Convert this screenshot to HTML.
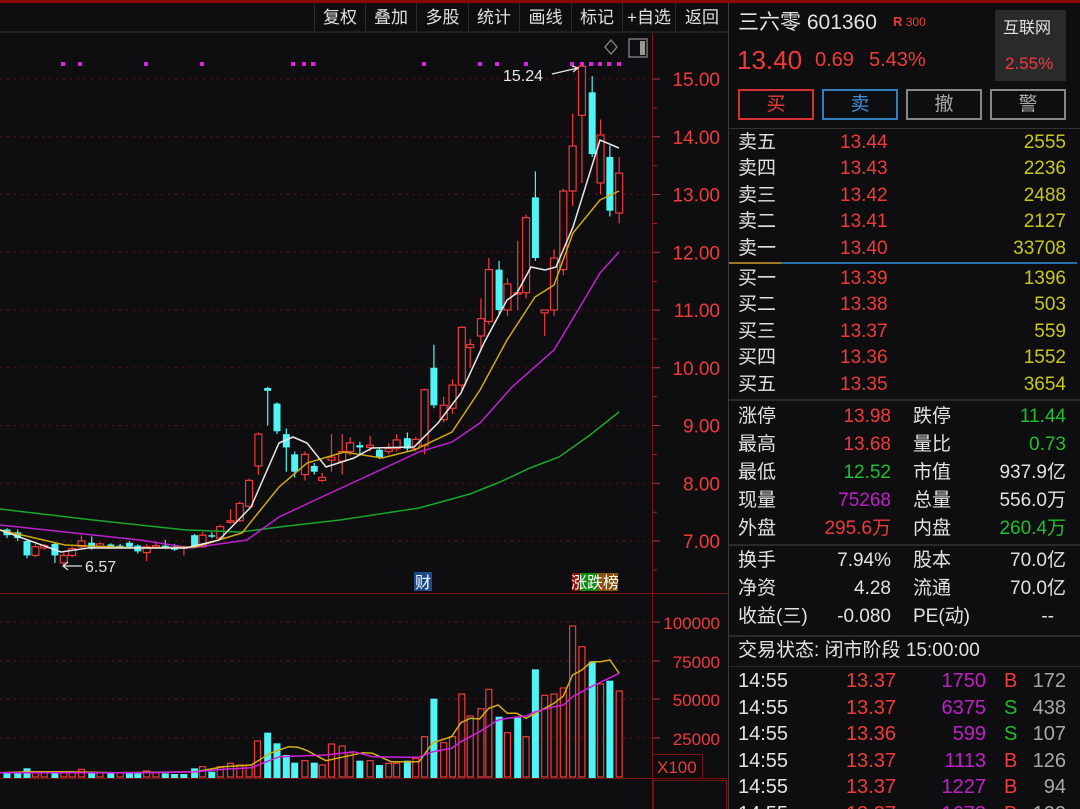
<!DOCTYPE html>
<html><head><meta charset="utf-8"><style>
*{margin:0;padding:0;box-sizing:border-box}
html,body{width:1080px;height:809px;overflow:hidden}
body{background:#0e0e10;position:relative;font-family:"Liberation Sans","Noto Sans CJK SC",sans-serif;color:#e0e0e0}
.a{position:absolute;white-space:nowrap;line-height:1}
.r{color:#f03a3a}.y{color:#c8c81a}.g{color:#1fbf2f}.m{color:#c020c8}.w{color:#e2e2e2}.gr{color:#a8a8a8}
.tb{position:absolute;top:3px;height:29px;border-left:1px solid #2a2a2a;font-size:17px;line-height:29px;text-align:center;color:#e0e0e0}
.btn{position:absolute;top:89px;height:31px;width:76px;border:2px solid #888;font-size:19px;line-height:27px;text-align:center}
</style></head><body>
<div class="a" style="left:0;top:0;width:1080px;height:3px;background:#8a0a0a"></div>
<div class="a" style="left:0;top:31px;width:728px;height:2px;background:#202020"></div>
<div class="tb" style="left:314px;width:51px">复权</div>
<div class="tb" style="left:365px;width:51px">叠加</div>
<div class="tb" style="left:416px;width:52px">多股</div>
<div class="tb" style="left:468px;width:51px">统计</div>
<div class="tb" style="left:519px;width:52px">画线</div>
<div class="tb" style="left:571px;width:51px">标记</div>
<div class="tb" style="left:622px;width:53px">+自选</div>
<div class="tb" style="left:675px;width:53px">返回</div>

<svg id="ch" class="a" style="left:0;top:0" width="728" height="809" xmlns="http://www.w3.org/2000/svg"></svg>

<div class="a" style="left:728px;top:3px;width:1px;height:806px;background:#3a3a3a"></div>
<div class="a w" style="left:738px;top:12px;font-size:21px">三六零 601360</div>
<div class="a r" style="left:893px;top:15px;font-size:13px;font-weight:bold">R<span style="font-weight:normal;font-size:12px"> 300</span></div>
<div class="a" style="left:995px;top:10px;width:71px;height:71px;background:#2a2a2c"></div>
<div class="a w" style="left:1003px;top:21px;font-size:16px">互联网</div>
<div class="a r" style="left:1005px;top:55px;font-size:17px">2.55%</div>
<div class="a r" style="left:737px;top:47px;font-size:26px">13.40</div>
<div class="a r" style="left:815px;top:50px;font-size:20px">0.69</div>
<div class="a r" style="left:869px;top:50px;font-size:20px">5.43%</div>
<div class="btn r" style="left:738px;border-color:#d83030">买</div>
<div class="btn" style="left:822px;border-color:#2f7fc1;color:#3a90d8">卖</div>
<div class="btn gr" style="left:906px">撤</div>
<div class="btn gr" style="left:990px">警</div>
<div class="a" style="left:729px;top:128px;width:351px;height:1px;background:#333"></div>
<div id="ob"></div>
<div class="a" style="left:729px;top:262px;width:52px;height:2px;background:#a07820"></div>
<div class="a" style="left:781px;top:262px;width:296px;height:2px;background:#2f6fa8"></div>
<div class="a" style="left:729px;top:399px;width:351px;height:2px;background:#2a2a2a"></div>
<div class="a" style="left:729px;top:544px;width:351px;height:2px;background:#2a2a2a"></div>
<div class="a" style="left:729px;top:635px;width:351px;height:2px;background:#2a2a2a"></div>
<div class="a w" style="left:738px;top:641px;font-size:19px">交易状态: 闭市阶段 15:00:00</div>
<div class="a" style="left:729px;top:666px;width:351px;height:1px;background:#2a2a2a"></div>

<script>
var ob=document.getElementById('ob'),h='';
function T(x,y,c,s,t,right,fs){fs=fs||19;h+='<div class="a '+c+'" style="'+(right?'right:'+(1080-x)+'px;':'left:'+x+'px;')+'top:'+(y-fs/2)+'px;font-size:'+fs+'px">'+t+'</div>';}
var sell=[['卖五','13.44','2555'],['卖四','13.43','2236'],['卖三','13.42','2488'],['卖二','13.41','2127'],['卖一','13.40','33708']];
var buy=[['买一','13.39','1396'],['买二','13.38','503'],['买三','13.37','559'],['买四','13.36','1552'],['买五','13.35','3654']];
sell.forEach(function(r,i){var y=142+i*26.6;T(738,y,'w',0,r[0]);T(840,y,'r',0,r[1]);T(1066,y,'y',0,r[2],1);});
buy.forEach(function(r,i){var y=278+i*26.6;T(738,y,'w',0,r[0]);T(840,y,'r',0,r[1]);T(1066,y,'y',0,r[2],1);});
var st=[['涨停','13.98','r','跌停','11.44','g'],['最高','13.68','r','量比','0.73','g'],['最低','12.52','g','市值','937.9亿','w'],['现量','75268','m','总量','556.0万','w'],['外盘','295.6万','r','内盘','260.4万','g']];
st.forEach(function(r,i){var y=416+i*28.2;T(738,y,'w',0,r[0]);T(891,y,r[2],0,r[1],1);T(913,y,'w',0,r[3]);T(1066,y,r[5],0,r[4],1);});
var s2=[['换手','7.94%','股本','70.0亿'],['净资','4.28','流通','70.0亿'],['收益(三)','-0.080','PE(动)','--']];
s2.forEach(function(r,i){var y=560+i*28;T(738,y,'w',0,r[0]);T(891,y,'w',0,r[1],1);T(913,y,'w',0,r[2]);T(1066-(i==2?12:0),y,'w',0,r[3],1);});
var tr=[['13.37','1750','B','172'],['13.37','6375','S','438'],['13.36','599','S','107'],['13.37','1113','B','126'],['13.37','1227','B','94'],['13.37','1673','B','122']];
tr.forEach(function(r,i){var y=681+i*26.6;T(738,y,'w',0,'14:55',0,20);T(896,y,'r',0,r[0],1,20);T(986,y,'m',0,r[1],1,20);T(1004,y,r[2]=='B'?'r':'g',0,r[2],0,20);T(1066,y,'gr',0,r[3],1,20);});
ob.innerHTML=h;

var s='',R='#f03a3a',C='#4ff5f5';
function py(p){return 79+(15-p)*57.75;}
[15,14,13,12,11,10,9,8,7].forEach(function(p){var y=py(p);s+='<line x1="0" y1="'+y+'" x2="652" y2="'+y+'" stroke="#6a1010" stroke-dasharray="2,5"/>';s+='<line x1="652" y1="'+y+'" x2="660" y2="'+y+'" stroke="#c03030"/>';s+='<text x="720" y="'+(y+7)+'" fill="'+R+'" font-size="19" text-anchor="end" font-family="Liberation Sans">'+p.toFixed(2)+'</text>';
 s+='<line x1="652" y1="'+(y+29)+'" x2="657" y2="'+(y+29)+'" stroke="#a02020"/>';});
[[100000,622],[75000,661],[50000,699],[25000,738]].forEach(function(v){s+='<line x1="0" y1="'+v[1]+'" x2="652" y2="'+v[1]+'" stroke="#6a1010" stroke-dasharray="2,5"/><line x1="652" y1="'+v[1]+'" x2="660" y2="'+v[1]+'" stroke="#c03030"/><text x="720" y="'+(v[1]+7)+'" fill="'+R+'" font-size="17" text-anchor="end" font-family="Liberation Sans">'+v[0]+'</text>';});
s+='<line x1="652.5" y1="33" x2="652.5" y2="809" stroke="#7a1010"/>';
s+='<line x1="0" y1="593.5" x2="728" y2="593.5" stroke="#7a1010"/>';
s+='<line x1="0" y1="778.5" x2="728" y2="778.5" stroke="#7a1010"/>';
s+='<rect x="652.5" y="754.5" width="50" height="24" fill="none" stroke="#7a1010"/><text x="657" y="773" fill="'+R+'" font-size="17" font-family="Liberation Sans">X100</text>';
s+='<rect x="653.5" y="780.5" width="73" height="30" fill="none" stroke="#7a1010"/>';
s+='<path d="M611 40 L617 47 L611 54 L605 47 Z" fill="none" stroke="#888" stroke-width="1.3"/>';
s+='<rect x="629" y="39" width="18" height="18" fill="none" stroke="#888" stroke-width="1.3"/><rect x="640" y="41" width="5" height="14" fill="#999"/>';
[63,80,146,202,293,304,313,424,480,497,526,572,582,591,600,609,619].forEach(function(x){s+='<rect x="'+(x-2)+'" y="62" width="4" height="4" fill="#e020e0"/>';});
var K=[[15,7.2,7.1,7.22,7.05],[38,7.15,7.05,7.2,7.0],[58,7.0,6.75,7.02,6.7],[76,6.75,6.9,6.95,6.72],[95,6.88,6.92,6.95,6.85],[118,6.95,6.75,6.98,6.62],[137,6.62,6.75,6.8,6.57],[155,6.75,6.87,6.9,6.72],[175,6.9,7.0,7.1,6.88],[197,6.97,6.87,7.08,6.85],[215,6.9,6.95,6.98,6.87],[238,6.94,6.9,6.96,6.88],[258,6.92,6.9,6.95,6.88],[278,6.97,6.9,7.0,6.87],[296,6.92,6.82,6.94,6.78],[315,6.8,6.9,6.95,6.65],[335,6.9,6.92,6.97,6.88],[355,6.92,6.9,7.02,6.86],[375,6.9,6.85,6.95,6.83],[395,6.88,6.9,6.92,6.75],[418,7.1,6.9,7.12,6.88],[435,6.9,7.1,7.15,6.88],[455,7.1,7.08,7.15,7.05],[473,7.05,7.25,7.28,7.02],[495,7.33,7.35,7.55,7.3],[515,7.35,7.65,7.68,7.33],[535,7.6,8.05,8.08,7.58],[555,8.3,8.85,8.88,8.15],[575,9.65,9.6,9.67,9.0],[595,9.38,8.9,9.4,8.85],[615,8.85,8.62,8.95,8.2],[633,8.5,8.2,8.55,8.1],[655,8.15,8.5,8.55,8.05],[675,8.3,8.2,8.35,8.15],[692,8.05,8.1,8.18,8.02],[712,8.4,8.45,8.85,8.2],[735,8.38,8.55,8.85,8.15],[752,8.55,8.7,8.8,8.48],[773,8.66,8.62,8.72,8.5],[795,8.62,8.66,8.82,8.55],[815,8.58,8.45,8.62,8.42],[835,8.55,8.6,8.7,8.5],[852,8.6,8.75,8.85,8.55],[875,8.78,8.6,8.88,8.55],[893,8.6,8.76,8.8,8.55],[912,8.65,9.62,9.64,8.5],[932,10.0,9.35,10.4,9.3],[953,9.1,9.35,9.5,9.05],[972,9.3,9.7,9.8,9.2],[992,9.7,10.7,10.72,9.6],[1010,10.35,10.4,10.5,10.0],[1033,10.55,10.85,11.2,10.3],[1050,10.8,11.7,11.9,10.75],[1072,11.7,11.0,11.85,10.9],[1090,11.0,11.45,11.55,10.9],[1112,11.3,11.3,12.2,11.0],[1130,11.3,12.6,12.65,11.2],[1150,12.95,11.9,13.4,11.85],[1170,10.95,11.0,11.0,10.55],[1190,11.0,11.9,12.05,10.9],[1210,11.7,13.06,13.1,11.6],[1230,13.06,13.84,14.4,12.8],[1250,14.37,15.22,15.24,13.2],[1272,14.77,13.7,15.05,13.65],[1290,13.2,14.03,14.3,13.0],[1310,13.65,12.72,13.85,12.62],[1330,12.68,13.37,13.65,12.5]];
K.forEach(function(k){var x=k[0]/2.148,up=k[2]>=k[1],c=up?R:C;var t=py(Math.max(k[1],k[2])),b=py(Math.min(k[1],k[2]));if(b-t<1.5)b=t+1.5;
 s+='<line x1="'+x+'" y1="'+py(k[3])+'" x2="'+x+'" y2="'+py(k[4])+'" stroke="'+c+'" stroke-width="1.2"/>';
 if(up)s+='<rect x="'+(x-3.5)+'" y="'+t+'" width="7" height="'+(b-t)+'" fill="#0e0e10" stroke="'+c+'" stroke-width="1.2"/>';else s+='<rect x="'+(x-3.5)+'" y="'+t+'" width="7" height="'+(b-t)+'" fill="'+c+'"/>';});
function pl(p,c){s+='<polyline points="'+p.map(function(q){return q.join(',')}).join(' ')+'" fill="none" stroke="'+c+'" stroke-width="1.5"/>';}
pl([[0,509],[93,520],[186,530],[240,532],[279,527],[340,520],[419,508],[470,494],[500,482],[530,468],[559,457],[590,435],[619,412]],'#1aa82a');
pl([[0,525],[140,540],[191,548],[247,540],[279,517],[326,495],[363,478],[419,452],[452,442],[480,423],[512,387],[554,350],[584,300],[600,273],[619,252]],'#c020d0');
pl([[0,530],[65,545],[140,548],[196,547],[242,533],[279,487],[307,463],[344,452],[382,458],[414,450],[452,432],[480,390],[507,340],[535,297],[554,285],[573,233],[600,200],[619,191]],'#d0a810');
pl([[0,530],[61,552],[88,548],[186,548],[219,540],[251,507],[279,443],[293,437],[307,443],[326,467],[354,458],[372,448],[414,447],[438,423],[461,393],[484,343],[507,300],[517,293],[531,267],[545,270],[556,267],[573,227],[600,140],[619,148]],'#e8e8e8');
s+='<text x="503" y="81" fill="#e8e8e8" font-size="16" font-family="Liberation Sans">15.24</text><path d="M552 74 L578 68 M572 66 L578 68 L573 72" stroke="#e8e8e8" fill="none" stroke-width="1.2"/>';
s+='<text x="85" y="572" fill="#e0e0e0" font-size="16" font-family="Liberation Sans">6.57</text><path d="M63 566 L82 566 M68 562 L63 566 L68 570" stroke="#e0e0e0" fill="none" stroke-width="1.2"/>';
s+='<rect x="414" y="572" width="18" height="19" fill="#1a4a8a"/><text x="415" y="588" fill="#fff" font-size="16" font-family="Noto Sans CJK SC">财</text>';
s+='<rect x="572" y="573" width="8" height="18" fill="#8a1010"/><rect x="580" y="573" width="18" height="18" fill="#108a10"/><rect x="598" y="573" width="20" height="18" fill="#8a5010"/><text x="571" y="588" fill="#fff" font-size="16" font-family="Noto Sans CJK SC">涨跌榜</text>';
var V=[[15,'c',548],[38,'c',548],[58,'c',535],[76,'r',548],[95,'r',548],[118,'c',548],[137,'r',548],[155,'r',548],[175,'r',538],[197,'c',545],[215,'r',548],[238,'c',550],[258,'r',548],[278,'c',550],[296,'c',550],[315,'r',543],[335,'r',548],[355,'c',550],[375,'c',552],[395,'c',552],[418,'c',535],[435,'r',530],[455,'c',545],[473,'r',530],[495,'r',520],[515,'r',525],[535,'r',525],[553,'r',453],[575,'c',428],[595,'c',460],[615,'c',495],[633,'c',518],[655,'r',512],[675,'c',518],[692,'r',525],[712,'r',462],[735,'r',468],[752,'r',488],[773,'c',512],[795,'r',512],[815,'c',525],[835,'r',520],[852,'r',520],[875,'c',512],[893,'r',505],[912,'r',440],[932,'c',326],[953,'r',458],[972,'r',440],[992,'r',312],[1010,'r',378],[1033,'r',356],[1050,'r',298],[1072,'c',380],[1090,'r',428],[1112,'c',383],[1130,'r',440],[1150,'c',238],[1170,'r',316],[1190,'r',312],[1210,'r',294],[1230,'r',108],[1250,'r',170],[1272,'c',215],[1290,'r',282],[1310,'c',272],[1330,'r',303]];
V.forEach(function(v){var x=v[0]/2.148,t=590+v[2]/3;if(v[1]=='c')s+='<rect x="'+(x-3.5)+'" y="'+t+'" width="7" height="'+(778-t)+'" fill="'+C+'"/>';else s+='<rect x="'+(x-3)+'" y="'+t+'" width="6" height="'+(777-t)+'" fill="none" stroke="'+R+'" stroke-width="1.2"/>';});
function vl(p,c){pl(p.map(function(q){return [(q[0]/2.148).toFixed(1),(590+q[1]/3).toFixed(1)]}),c);}
vl([[0,548],[60,545],[150,545],[250,548],[420,545],[480,530],[540,525],[580,490],[620,470],[640,472],[660,482],[700,512],[740,500],[780,488],[800,490],[840,515],[900,515],[930,458],[970,440],[990,398],[1010,385],[1030,387],[1050,355],[1070,345],[1090,370],[1110,370],[1130,385],[1150,370],[1190,340],[1210,318],[1230,255],[1250,240],[1270,215],[1290,215],[1310,210],[1330,250]],'#d0b010');
vl([[0,548],[300,548],[420,545],[480,538],[540,533],[600,500],[700,495],[760,485],[800,500],[870,502],[900,502],[930,485],[970,475],[990,455],[1030,425],[1070,390],[1090,385],[1130,378],[1150,365],[1190,350],[1210,345],[1230,320],[1270,290],[1330,250]],'#d020e0');
document.getElementById('ch').innerHTML=s;
</script>
</body></html>
